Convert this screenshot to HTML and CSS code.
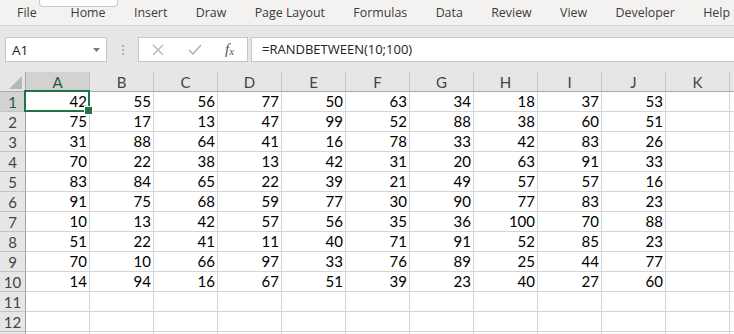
FILE: index.html
```html
<!DOCTYPE html>
<html>
<head>
<meta charset="utf-8">
<link rel="stylesheet" href="styles.css">
</head>
<body>
<div class="app">
  <nav class="tabs">
    <span class="tab file">File</span>
    <span class="tab home">Home</span>
    <span class="tab">Insert</span>
    <span class="tab">Draw</span>
    <span class="tab">Page Layout</span>
    <span class="tab">Formulas</span>
    <span class="tab">Data</span>
    <span class="tab">Review</span>
    <span class="tab">View</span>
    <span class="tab">Developer</span>
    <span class="tab">Help</span>
  </nav>
  <div class="fbar">
    <div class="namebox"><span>A1</span><svg class="caret" width="7" height="4" viewBox="0 0 7 4"><path d="M0 0H7L3.5 4Z" fill="#7a7a7a"/></svg></div>
    <div class="dots"><i></i><i></i><i></i></div>
    <div class="fbtns">
      <svg width="12" height="12" viewBox="0 0 12 12"><path d="M1 1L11 11M11 1L1 11" stroke="#b4b4b4" stroke-width="1.3" fill="none"/></svg>
      <svg width="14" height="11" viewBox="0 0 14 11"><path d="M1 6L5 10L13 1" stroke="#b4b4b4" stroke-width="1.6" fill="none"/></svg>
      <span class="fx">f<sub>x</sub></span>
    </div>
    <div class="finput">=RANDBETWEEN(10;100)</div>
  </div>
  <div class="sheet">
    <div class="hd corner"><svg width="13" height="13" viewBox="0 0 13 13"><path d="M13 0V13H0Z" fill="#b6b6b6"/></svg></div>
    <div class="hd col sel">A</div><div class="hd col">B</div><div class="hd col">C</div><div class="hd col">D</div><div class="hd col">E</div><div class="hd col">F</div><div class="hd col">G</div><div class="hd col">H</div><div class="hd col">I</div><div class="hd col">J</div><div class="hd col">K</div><div class="hd col"></div>

    <div class="hd row sel">1</div><div class="c active">42</div><div class="c">55</div><div class="c">56</div><div class="c">77</div><div class="c">50</div><div class="c">63</div><div class="c">34</div><div class="c">18</div><div class="c">37</div><div class="c">53</div><div class="c"></div><div class="c"></div>
    <div class="hd row">2</div><div class="c">75</div><div class="c">17</div><div class="c">13</div><div class="c">47</div><div class="c">99</div><div class="c">52</div><div class="c">88</div><div class="c">38</div><div class="c">60</div><div class="c">51</div><div class="c"></div><div class="c"></div>
    <div class="hd row">3</div><div class="c">31</div><div class="c">88</div><div class="c">64</div><div class="c">41</div><div class="c">16</div><div class="c">78</div><div class="c">33</div><div class="c">42</div><div class="c">83</div><div class="c">26</div><div class="c"></div><div class="c"></div>
    <div class="hd row">4</div><div class="c">70</div><div class="c">22</div><div class="c">38</div><div class="c">13</div><div class="c">42</div><div class="c">31</div><div class="c">20</div><div class="c">63</div><div class="c">91</div><div class="c">33</div><div class="c"></div><div class="c"></div>
    <div class="hd row">5</div><div class="c">83</div><div class="c">84</div><div class="c">65</div><div class="c">22</div><div class="c">39</div><div class="c">21</div><div class="c">49</div><div class="c">57</div><div class="c">57</div><div class="c">16</div><div class="c"></div><div class="c"></div>
    <div class="hd row">6</div><div class="c">91</div><div class="c">75</div><div class="c">68</div><div class="c">59</div><div class="c">77</div><div class="c">30</div><div class="c">90</div><div class="c">77</div><div class="c">83</div><div class="c">23</div><div class="c"></div><div class="c"></div>
    <div class="hd row">7</div><div class="c">10</div><div class="c">13</div><div class="c">42</div><div class="c">57</div><div class="c">56</div><div class="c">35</div><div class="c">36</div><div class="c">100</div><div class="c">70</div><div class="c">88</div><div class="c"></div><div class="c"></div>
    <div class="hd row">8</div><div class="c">51</div><div class="c">22</div><div class="c">41</div><div class="c">11</div><div class="c">40</div><div class="c">71</div><div class="c">91</div><div class="c">52</div><div class="c">85</div><div class="c">23</div><div class="c"></div><div class="c"></div>
    <div class="hd row">9</div><div class="c">70</div><div class="c">10</div><div class="c">66</div><div class="c">97</div><div class="c">33</div><div class="c">76</div><div class="c">89</div><div class="c">25</div><div class="c">44</div><div class="c">77</div><div class="c"></div><div class="c"></div>
    <div class="hd row">10</div><div class="c">14</div><div class="c">94</div><div class="c">16</div><div class="c">67</div><div class="c">51</div><div class="c">39</div><div class="c">23</div><div class="c">40</div><div class="c">27</div><div class="c">60</div><div class="c"></div><div class="c"></div>
    <div class="hd row">11</div><div class="c"></div><div class="c"></div><div class="c"></div><div class="c"></div><div class="c"></div><div class="c"></div><div class="c"></div><div class="c"></div><div class="c"></div><div class="c"></div><div class="c"></div><div class="c"></div>
    <div class="hd row">12</div><div class="c"></div><div class="c"></div><div class="c"></div><div class="c"></div><div class="c"></div><div class="c"></div><div class="c"></div><div class="c"></div><div class="c"></div><div class="c"></div><div class="c"></div><div class="c"></div>
    <div class="hd row"></div><div class="c"></div><div class="c"></div><div class="c"></div><div class="c"></div><div class="c"></div><div class="c"></div><div class="c"></div><div class="c"></div><div class="c"></div><div class="c"></div><div class="c"></div><div class="c"></div>
  </div>
</div>
</body>
</html>
```
FILE: styles.css
```css
* { box-sizing: border-box; }
html, body { margin: 0; padding: 0; }
body {
  width: 734px;
  height: 334px;
  overflow: hidden;
  background: #e6e6e6;
  font-family: "Open Sans", "Noto Sans", sans-serif;
}
.app { width: 734px; height: 334px; overflow: hidden; }

.tabs {
  height: 26px;
  background: #f3f2f1;
  border-bottom: 1px solid #d4d4d4;
  display: flex;
  align-items: center;
  gap: 28.4px;
  padding-left: 17px;
  font-size: 12.4px;
  color: #3b3b3b;
  white-space: nowrap;
  position: relative;
}
.tab { line-height: 24px; }
.file { margin-right: 5.5px; }
.home { position: relative; }
.home::before {
  content: "";
  position: absolute;
  left: -32px;
  top: -8px;
  width: 77px;
  height: 13px;
  background: #fff;
  border: 1px solid #c8c8c8;
  border-top: none;
  border-radius: 0 0 4px 4px;
}

.fbar {
  height: 46px;
  display: flex;
  align-items: flex-start;
  padding: 11px 0 0 5px;
}
.namebox {
  width: 102px;
  height: 25px;
  background: #fff;
  border: 1px solid #c6c6c6;
  display: flex;
  align-items: center;
  justify-content: space-between;
  padding: 0 6px 0 6px;
  font-size: 13.5px;
  color: #222;
}
.caret { margin-top: 1px; }
.dots {
  width: 31px;
  height: 25px;
  display: flex;
  flex-direction: column;
  align-items: center;
  justify-content: center;
  gap: 2px;
}
.dots i { display: block; width: 2px; height: 2px; background: #b0b0b0; }
.fbtns {
  width: 110px;
  height: 25px;
  background: #fff;
  border: 1px solid #c6c6c6;
  display: flex;
  align-items: center;
  padding-left: 13px;
  gap: 24px;
}
.fx {
  font-family: "Liberation Serif", serif;
  font-style: italic;
  font-size: 15px;
  color: #555;
  line-height: 1;
  margin-left: -1px;
}
.fx sub { font-size: 11px; vertical-align: -1px; }
.finput {
  margin-left: 3px;
  flex: 1;
  height: 25px;
  background: #fff;
  border: 1px solid #c6c6c6;
  border-right: none;
  padding-left: 10px;
  font-size: 13px;
  line-height: 23px;
  color: #222;
  white-space: nowrap;
}

.sheet {
  display: grid;
  grid-template-columns: 26px repeat(12, 64px);
  grid-template-rows: 20px;
  grid-auto-rows: 20px;
  background: #fff;
  font-family: "Lato", "Carlito", sans-serif;
  font-size: 15px;
}
.hd {
  background: #e6e6e6;
  color: #444;
  display: flex;
  align-items: center;
  justify-content: center;
}
.hd.col {
  border-right: 1px solid #c4c4c4;
  border-bottom: 1px solid #ababab;
}
.hd.row {
  border-right: 1px solid #9f9f9f;
  border-bottom: 1px solid #c4c4c4;
}
.hd.corner {
  border-right: 1px solid #ababab;
  border-bottom: 1px solid #ababab;
  justify-content: flex-end;
  align-items: flex-end;
  padding: 0 3px 2px 0;
}
.hd.sel { background: #d2d2d2; color: #215a3a; }
.c {
  border-right: 1px solid #d4d4d4;
  border-bottom: 1px solid #d4d4d4;
  text-align: right;
  padding-right: 2px;
  line-height: 19px;
  color: #000;
}
.c.active { position: relative; }
.c.active::after {
  content: "";
  position: absolute;
  left: -2px;
  top: -2px;
  right: -1px;
  bottom: -1px;
  border: 2px solid #217346;
}
.c.active::before {
  content: "";
  position: absolute;
  right: -4px;
  bottom: -4px;
  width: 7px;
  height: 7px;
  background: #217346;
  border: 1px solid #fff;
  z-index: 1;
}
```
